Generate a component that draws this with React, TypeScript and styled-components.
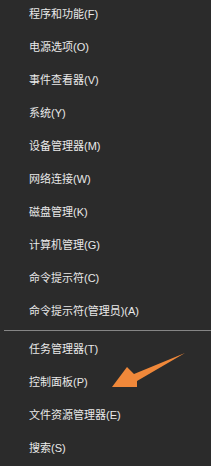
import React from 'react';
import styled, { createGlobalStyle } from 'styled-components';

const GlobalStyle = createGlobalStyle`
   html, body {
      margin: 0;
      padding: 0;
      background: #2b2b2b;
   }
`;

const StyledMenu = styled.div`
   position: relative;
   width: 211px;
   height: 466px;
   overflow: hidden;
   background: #2b2b2b;
   font-family: 'Liberation Sans', 'Noto Sans CJK SC', sans-serif;
   color: #e9e9e9;
`;

const List = styled.ul`
   list-style: none;
   margin: -2px 0 0;
   padding: 0;
`;

const Item = styled.li`
   display: flex;
   align-items: center;
   height: 33px;
   padding-left: 29px;
   font-size: 11px;
   line-height: 1;
   white-space: nowrap;
`;

const Separator = styled.li`
   height: 1px;
   margin: 2px 0 2px 4px;
   background: #858585;
`;

const Arrow = styled.svg`
   position: absolute;
   left: 0;
   top: 0;
`;

const topItems = [
   '程序和功能(F)',
   '电源选项(O)',
   '事件查看器(V)',
   '系统(Y)',
   '设备管理器(M)',
   '网络连接(W)',
   '磁盘管理(K)',
   '计算机管理(G)',
   '命令提示符(C)',
   '命令提示符(管理员)(A)',
];

const bottomItems = ['任务管理器(T)', '控制面板(P)', '文件资源管理器(E)', '搜索(S)'];

const App: React.FC = () => {
   return (
      <StyledMenu>
         <GlobalStyle />
         <List>
            {topItems.map((t) => (
               <Item key={t}>{t}</Item>
            ))}
            <Separator />
            {bottomItems.map((t) => (
               <Item key={t}>{t}</Item>
            ))}
         </List>
         <Arrow width='211' height='466' viewBox='0 0 211 466'>
            <polygon
               points='185,353 134,374 127,367 112,387 137,387 137,381'
               fill='#f0883a'
            />
         </Arrow>
      </StyledMenu>
   );
};

export default App;
